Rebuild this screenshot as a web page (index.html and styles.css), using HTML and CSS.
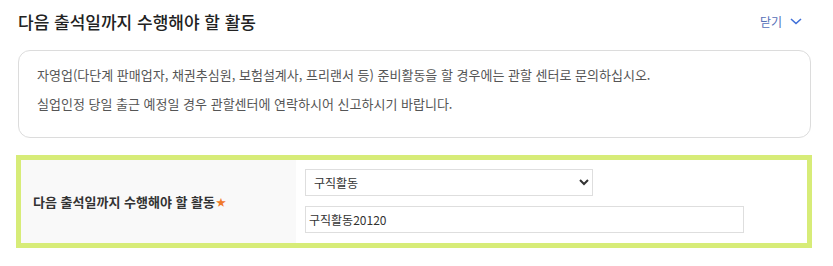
FILE: index.html
```html
<!DOCTYPE html>
<html lang="ko">
<head>
<meta charset="utf-8">
<link rel="stylesheet" href="styles.css">
</head>
<body>
<div class="page">
  <div class="header">
    <h2 class="title">다음 출석일까지 수행해야 할 활동</h2>
    <button class="toggle" type="button">닫기
      <svg class="chev" width="12" height="7" viewBox="0 0 12 7"><path d="M1 1 L6 5.5 L11 1" fill="none" stroke="#3f6fd8" stroke-width="1.6"/></svg>
    </button>
  </div>
  <div class="info">
    <p>자영업(다단계 판매업자, 채권추심원, 보험설계사, 프리랜서 등) 준비활동을 할 경우에는 관할 센터로 문의하십시오.</p>
    <p>실업인정 당일 출근 예정일 경우 관할센터에 연락하시어 신고하시기 바랍니다.</p>
  </div>
  <div class="form-box">
    <div class="label">다음 출석일까지 수행해야 할 활동<span class="req">★</span></div>
    <div class="field">
      <select class="sel"><option>구직활동</option></select>
      <input class="txt" type="text" value="구직활동20120">
    </div>
  </div>
</div>
</body>
</html>
```

FILE: styles.css
```css
* { box-sizing: border-box; }
html, body { margin: 0; padding: 0; background: #fff; }
body { font-family: "Noto Sans CJK KR", "Noto Sans", sans-serif; color: #222; }
.page { width: 833px; padding: 0 22px 0 18px; }
.header { display: flex; justify-content: space-between; align-items: center; height: 42px; }
.title { margin: 0; font-size: 17px; font-weight: 500; color: #222; letter-spacing: 0; }
.toggle { display: flex; align-items: center; gap: 8px; border: 0; background: none; padding: 0; margin-right: 9px; font-family: inherit; font-size: 12px; color: #5470b8; cursor: pointer; }
.chev { display: block; }
.info { margin-top: 8px; height: 88px; border: 1px solid #dcdcdc; border-radius: 12px; padding: 9px 18px 0 18px; }
.info p { margin: 0; font-size: 13px; line-height: 29px; color: #555; }
.form-box { margin: 17px -1px 0 -2px; display: flex; border: 5px solid #d7ec78; height: 93px; }
.label { width: 275px; background: #f9f9f9; display: flex; align-items: center; padding-left: 12px; font-size: 13px; font-weight: 700; color: #333; }
.req { color: #f07a2a; font-size: 10px; margin-left: 1px; }
.field { flex: 1; padding: 9px 0 0 9px; display: flex; flex-direction: column; gap: 10px; }
.sel { width: 288px; height: 27px; border: 1px solid #dedede; background: #fff; font-family: inherit; font-size: 12px; color: #333; padding: 0 4px; border-radius: 0; }
.txt { width: 439px; height: 27px; border: 1px solid #dedede; font-family: inherit; font-size: 12px; color: #333; padding: 0 3px; outline: none; }
```
